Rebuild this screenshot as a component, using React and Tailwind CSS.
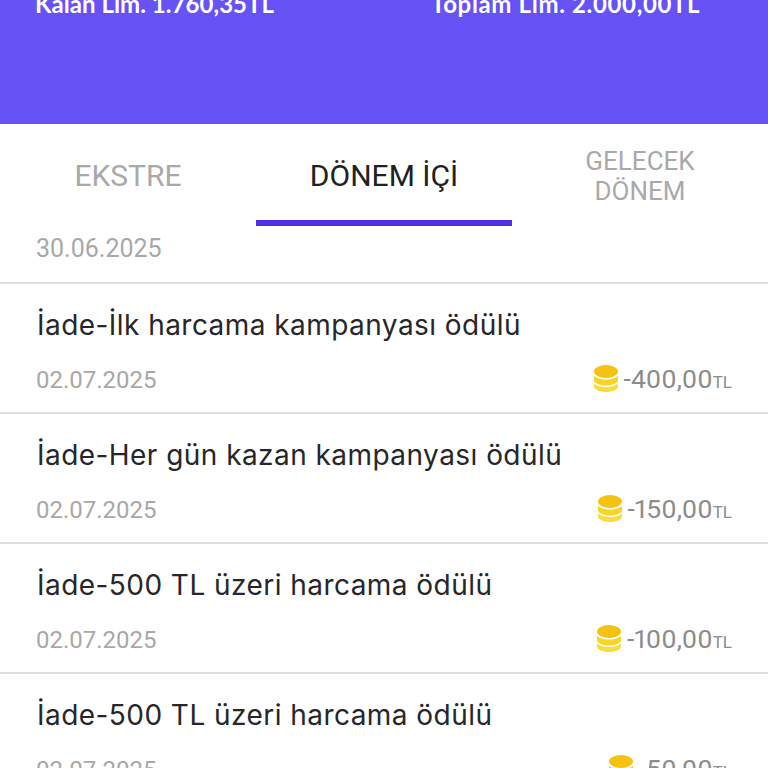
const rows = [
  { title: 'İade-İlk harcama kampanyası ödülü', date: '02.07.2025', amount: '-400,00' },
  { title: 'İade-Her gün kazan kampanyası ödülü', date: '02.07.2025', amount: '-150,00' },
  { title: 'İade-500 TL üzeri harcama ödülü', date: '02.07.2025', amount: '-100,00' },
  { title: 'İade-500 TL üzeri harcama ödülü', date: '02.07.2025', amount: '-50,00' },
];

function Coins() {
  return (
    <svg width="24" height="27" viewBox="0 0 24 27" className="mb-[3px] shrink-0">
      <path d="M0 18v3.500c0 3 5.400 5.500 12 5.500s12-2.500 12-5.500v-3.500c-2 2.600-6.600 4-12 4s-10-1.400-12-4z" fill="#fbdc3c" />
      <path d="M0 10.500v4.500c0 3 5.400 5.500 12 5.500s12-2.500 12-5.500v-4.500c-2 2.600-6.600 4-12 4s-10-1.400-12-4z" fill="#f9d423" />
      <ellipse cx="12" cy="6.500" rx="12" ry="6.500" fill="#f5c211" />
    </svg>
  );
}

function Row({ title, date, amount }) {
  return (
    <div className="h-[130px] shrink-0 border-b-2 border-[#dedede] pl-[37px] pr-[36px] pt-[23px]">
      <div className="font-['Inter',sans-serif] text-[28px] leading-[36px] tracking-[0.45px] text-[#26262b]">{title}</div>
      <div className="mt-[16px] flex items-center justify-between">
        <span className="-ml-px font-['Roboto',sans-serif] text-[24px] leading-[36px] text-[#a8a8a8]">{date}</span>
        <span className="flex items-center gap-[6px] font-['Roboto',sans-serif] text-[26.5px] leading-[36px] text-[#8c8c8c] proportional-nums">
          <Coins />
          <span className="pt-[2px]">
            {amount}
            <span className="text-[17px]">TL</span>
          </span>
        </span>
      </div>
    </div>
  );
}

export default function App() {
  return (
    <div className="h-[768px] w-[768px] overflow-hidden bg-white">
      <div className="h-[124px] bg-[#6753f5]">
        <div className="flex -translate-y-[11px] pl-[35px] font-['Lato',sans-serif] text-[24px] font-bold leading-[30px] text-white">
          <span className="w-[396px] tracking-[0.05px]">Kalan Lim. 1.760,35TL</span>
          <span className="tracking-[0.65px]">Toplam Lim. 2.000,00TL</span>
        </div>
      </div>

      <div className="flex h-[102px] font-['Roboto',sans-serif] text-[30px] leading-[30px] text-[#a9a9a9]">
        <div className="flex w-[256px] items-center justify-center pt-[2px]">EKSTRE</div>
        <div className="flex w-[256px] items-center justify-center border-b-[6px] border-[#4c32e3] pt-[8px] text-[#212121]">DÖNEM İÇİ</div>
        <div className="flex w-[256px] items-center justify-center pt-[2px] text-center text-[26px]">GELECEK<br />DÖNEM</div>
      </div>

      <div className="h-[58px] border-b-2 border-[#dedede] pl-[36px] pt-[5px] font-['Roboto',sans-serif] text-[25px] leading-[36px] text-[#a8a8a8]">
        30.06.2025
      </div>

      {rows.map((r, i) => (
        <Row key={i} title={r.title} date={r.date} amount={r.amount} />
      ))}
    </div>
  );
}
